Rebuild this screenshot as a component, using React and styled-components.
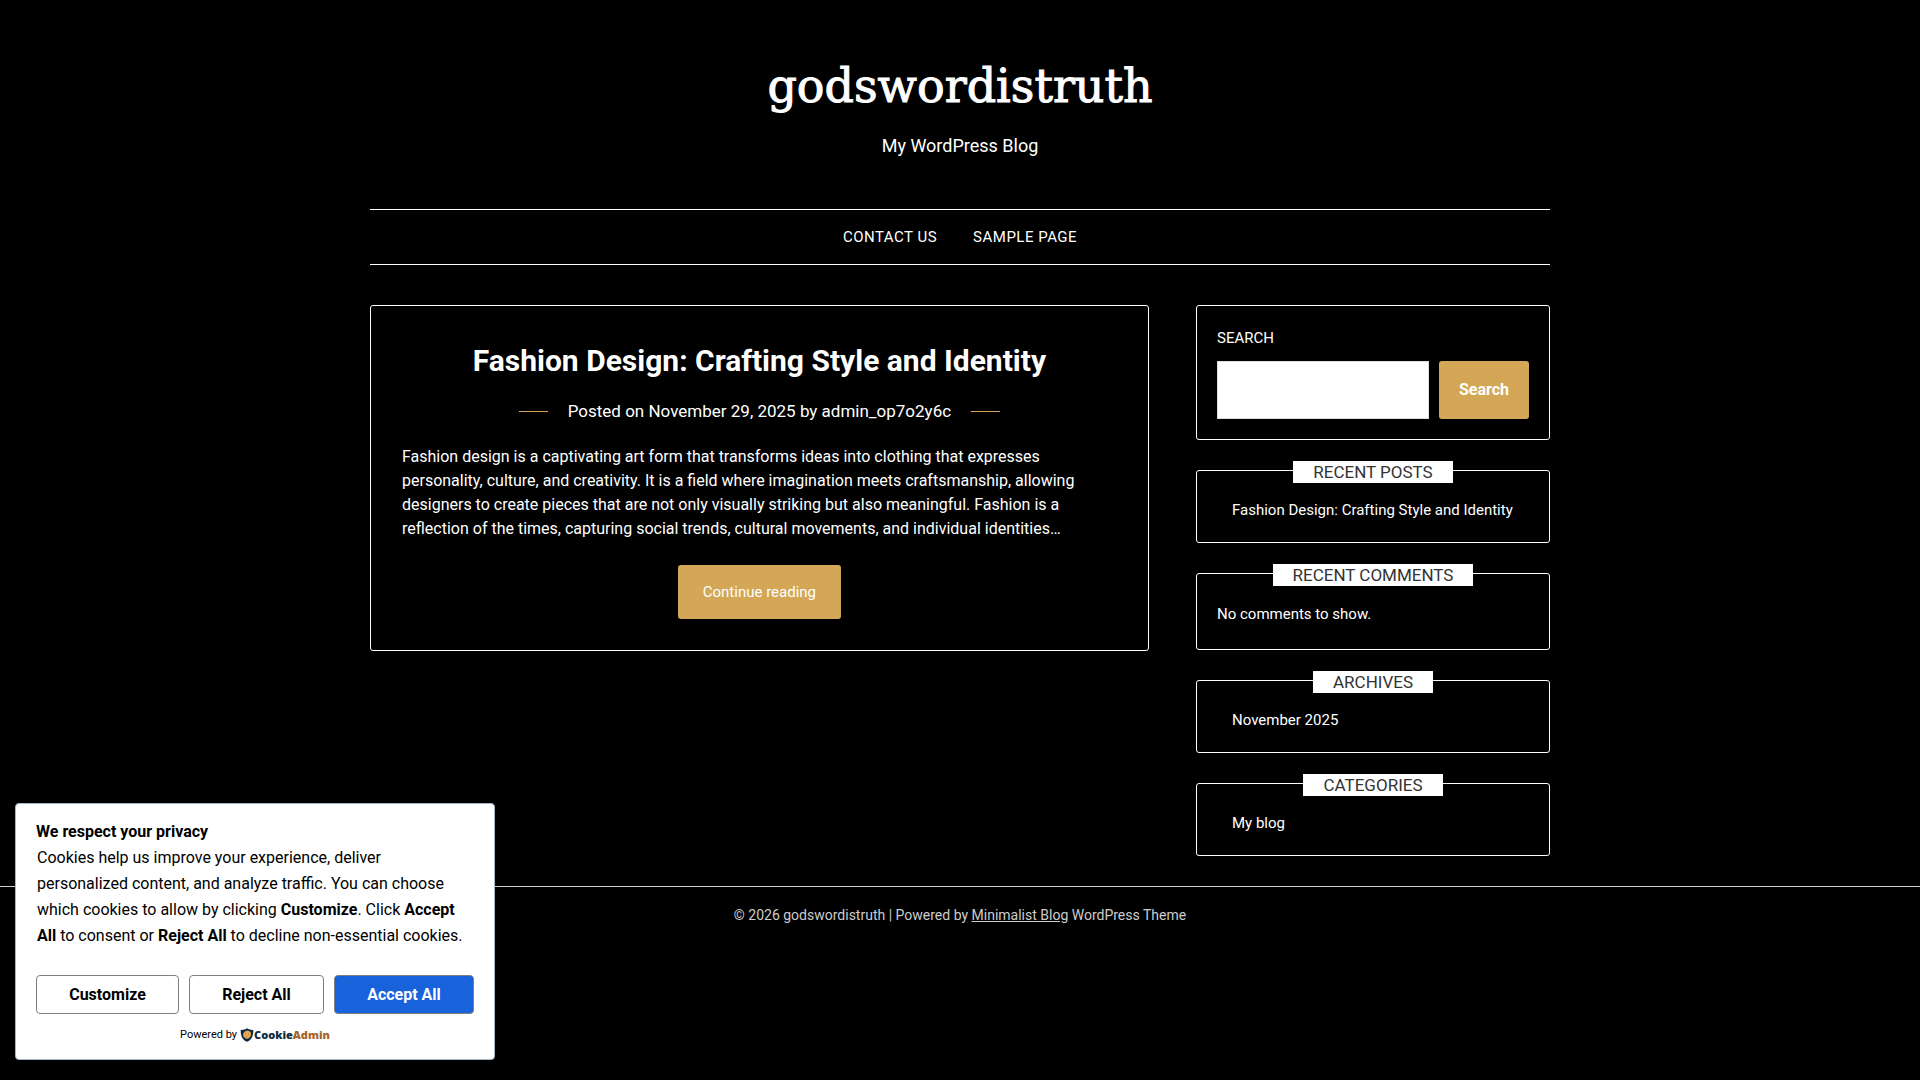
import React, { useState } from 'react';
import styled, { createGlobalStyle, css } from 'styled-components';

const GlobalStyle = createGlobalStyle`
  *, *::before, *::after {
    box-sizing: border-box;
  }
  body {
    margin: 0;
    background: #000;
    color: #fff;
    font-family: Roboto, "Liberation Sans", sans-serif;
    font-size: 16px;
    line-height: 24px;
  }
  a {
    color: inherit;
    text-decoration: none;
  }
  h1, h2, p, ul {
    margin: 0;
    padding: 0;
    font-weight: 400;
  }
`;

const Container = styled.div`
  width: 100%;
  max-width: 1180px;
  margin: 0 auto;
`;

/**
 * Header
 */
const Header = styled.header`
  text-align: center;
`;

const Branding = styled.div`
  padding: 54px 0 50px;
`;

const SiteTitle = styled.h1`
  font-family: "DejaVu Serif", serif;
  font-size: 46px;
  font-weight: 400;
  line-height: 64px;
  -webkit-text-stroke: 1px #fff;
`;

const Tagline = styled.p`
  margin-top: 14px;
  font-size: 18px;
  line-height: 27px;
`;

const Nav = styled.nav`
  display: flex;
  justify-content: center;
  gap: 36px;
  padding: 15px 0;
  border-top: 1px solid #fff;
  border-bottom: 1px solid #fff;
  font-size: 15px;
  letter-spacing: 0.5px;
  text-transform: uppercase;
`;

/**
 * Content
 */
const Columns = styled.div`
  display: grid;
  grid-template-columns: 66% 30%;
  justify-content: space-between;
  align-items: start;
  padding: 40px 0 30px;
`;

const panel = css`
  border: 1px solid #fff;
  border-radius: 3px;
`;

const Post = styled.article`
  ${panel}
  display: flex;
  flex-direction: column;
  align-items: center;
  padding: 31px;
`;

const PostTitle = styled.h2`
  font-size: 30px;
  font-weight: 700;
  line-height: 48px;
  text-align: center;
`;

const PostMeta = styled.div`
  display: flex;
  align-items: center;
  gap: 20px;
  margin-top: 14px;
  font-size: 17px;
  line-height: 24px;

  &::before,
  &::after {
    content: '';
    width: 29px;
    height: 1px;
    background: #d3a755;
  }
`;

const Excerpt = styled.p`
  width: 100%;
  margin: 22px 0 24px;
`;

const ReadMore = styled.a`
  padding: 15px 25px;
  border-radius: 3px;
  background: #d3a755;
  font-size: 15px;
`;

const Sidebar = styled.aside`
  display: flex;
  flex-direction: column;
  gap: 30px;
`;

const Widget = styled.section`
  ${panel}
  padding: 0 20px 20px;
  font-size: 15px;
`;

const WidgetTitle = styled.h2`
  width: fit-content;
  margin: -10px auto 15px;
  padding: 0 20px;
  background: #fff;
  color: #333;
  font-size: 17px;
  line-height: 22px;
  text-transform: uppercase;
`;

const WidgetList = styled.ul`
  padding-left: 15px;
  list-style: none;
`;

const WidgetText = styled.p`
  padding: 1px 0 3px;
`;

const SearchForm = styled.form`
  ${panel}
  padding: 20px;
  font-size: 15px;
`;

const SearchLabel = styled.label`
  display: block;
  margin-bottom: 11px;
  text-transform: uppercase;
`;

const SearchRow = styled.div`
  display: flex;
  gap: 10px;
`;

const SearchInput = styled.input`
  flex: 1;
  min-width: 0;
  height: 58px;
  padding: 8px;
  border: 1px solid #ddd;
  border-radius: 0;
  background: #fff;
  color: #000;
  font: inherit;
`;

const SearchButton = styled.button`
  padding: 0 20px;
  border: 0;
  border-radius: 3px;
  background: #d3a755;
  color: #fff;
  font: inherit;
  font-size: 16px;
  font-weight: 700;
`;

const Footer = styled.footer`
  padding: 16px 0;
  border-top: 1px solid #ccc;
  color: #ccc;
  font-size: 14px;
  text-align: center;

  a {
    text-decoration: underline;
  }
`;

/**
 * Cookie consent
 */
const Consent = styled.div`
  position: fixed;
  left: 15px;
  bottom: 20px;
  width: 480px;
  padding: 15px 20px 11px;
  border: 1px solid #a8b5c4;
  border-radius: 4px;
  background: #fff;
  color: #000;
  line-height: 26px;
`;

const ConsentTitle = styled.h2`
  font-size: 16px;
  font-weight: 700;
`;

const ConsentText = styled.p`
  padding: 0 1px;
`;

const ConsentActions = styled.div`
  display: flex;
  gap: 10px;
  margin-top: 26px;
`;

const ConsentButton = styled.button`
  flex: 1 1 auto;
  height: 39px;
  padding: 0 30px;
  border: 1px solid #808080;
  border-radius: 4px;
  background: ${(props) => (props.$primary ? '#1863dc' : '#fff')};
  color: ${(props) => (props.$primary ? '#fff' : '#000')};
  font: inherit;
  font-weight: 700;
`;

const PoweredBy = styled.div`
  display: flex;
  justify-content: center;
  align-items: center;
  gap: 3px;
  margin-top: 8px;
  font-size: 11px;
`;

const Brand = styled.a`
  display: flex;
  align-items: center;
  color: #0c2a44;
  font-family: "Noto Sans", sans-serif;
  font-size: 11px;
  font-weight: 900;

  em {
    color: #a4642a;
    font-style: normal;
  }
`;

const ShieldIcon = () => (
  <svg width="14" height="14" viewBox="0 0 13 14" aria-hidden="true">
    <path d="M6.5 0.2 C8 1.4 10.4 2 12.8 1.9 C13 7.4 11.4 11.6 6.5 13.8 C1.6 11.6 0 7.4 0.2 1.9 C2.6 2 5 1.4 6.5 0.2Z" fill="#0c2a44" />
    <path d="M6.5 2.5 L8.2 3 L9.9 3.7 L10.4 5.4 L10.6 7.1 L9.7 8.8 L8.3 10.2 L6.5 10.7 L4.6 10.2 L3.2 8.8 L2.5 7 L3 5 L4.4 3.4Z" fill="#e9a94f" />
    <circle cx="5.2" cy="5.4" r="0.6" fill="#b87a32" />
    <circle cx="8" cy="6.2" r="0.6" fill="#b87a32" />
    <circle cx="6" cy="8.4" r="0.6" fill="#b87a32" />
  </svg>
);

const CookieConsent = () => {
  const [open, setOpen] = useState(true);
  const close = () => setOpen(false);

  if (!open) {
    return null;
  }
  return (
    <Consent role="dialog" aria-labelledby="consent-title">
      <ConsentTitle id="consent-title">We respect your privacy</ConsentTitle>
      <ConsentText>
        Cookies help us improve your experience, deliver personalized content, and analyze
        traffic. You can choose which cookies to allow by clicking <b>Customize</b>.
        Click <b>Accept All</b> to consent or <b>Reject All</b> to decline non-essential cookies.
      </ConsentText>
      <ConsentActions>
        <ConsentButton type="button">Customize</ConsentButton>
        <ConsentButton type="button" onClick={close}>Reject All</ConsentButton>
        <ConsentButton type="button" $primary onClick={close}>Accept All</ConsentButton>
      </ConsentActions>
      <PoweredBy>
        <span>Powered by</span>
        <Brand href="#cookieadmin">
          <ShieldIcon />
          <span>Cookie<em>Admin</em></span>
        </Brand>
      </PoweredBy>
    </Consent>
  );
};

const LinkWidget = ({ title, links }) => (
  <Widget>
    <WidgetTitle>{title}</WidgetTitle>
    <WidgetList>
      {links.map((link) => (
        <li key={link}><a href="#post">{link}</a></li>
      ))}
    </WidgetList>
  </Widget>
);

const App = () => (
  <>
    <GlobalStyle />
    <Container>
      <Header>
        <Branding>
          <SiteTitle><a href="#home">godswordistruth</a></SiteTitle>
          <Tagline>My WordPress Blog</Tagline>
        </Branding>
        <Nav>
          <a href="#contact">Contact Us</a>
          <a href="#sample">Sample Page</a>
        </Nav>
      </Header>
      <Columns>
        <Post>
          <PostTitle><a href="#post">Fashion Design: Crafting Style and Identity</a></PostTitle>
          <PostMeta>
            <span>Posted on <a href="#date">November 29, 2025</a> by <a href="#author">admin_op7o2y6c</a></span>
          </PostMeta>
          <Excerpt>
            Fashion design is a captivating art form that transforms ideas into clothing that
            expresses personality, culture, and creativity. It is a field where imagination meets
            craftsmanship, allowing designers to create pieces that are not only visually striking
            but also meaningful. Fashion is a reflection of the times, capturing social trends,
            cultural movements, and individual identities…
          </Excerpt>
          <ReadMore href="#post">Continue reading</ReadMore>
        </Post>
        <Sidebar>
          <SearchForm role="search" onSubmit={(e) => e.preventDefault()}>
            <SearchLabel htmlFor="search">Search</SearchLabel>
            <SearchRow>
              <SearchInput id="search" type="search" />
              <SearchButton type="submit">Search</SearchButton>
            </SearchRow>
          </SearchForm>
          <LinkWidget title="Recent Posts" links={['Fashion Design: Crafting Style and Identity']} />
          <Widget>
            <WidgetTitle>Recent Comments</WidgetTitle>
            <WidgetText>No comments to show.</WidgetText>
          </Widget>
          <LinkWidget title="Archives" links={['November 2025']} />
          <LinkWidget title="Categories" links={['My blog']} />
        </Sidebar>
      </Columns>
    </Container>
    <Footer>
      © 2026 godswordistruth | Powered by <a href="#theme">Minimalist Blog</a> WordPress Theme
    </Footer>
    <CookieConsent />
  </>
);

export default App;
